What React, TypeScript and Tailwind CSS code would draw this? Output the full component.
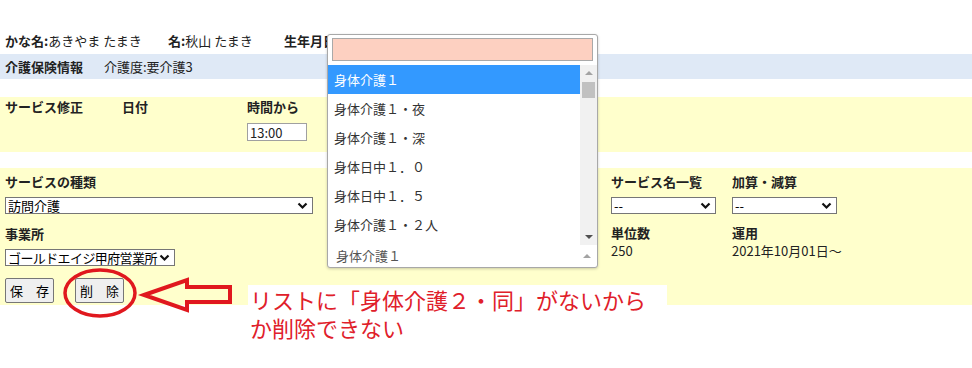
import React from "react";

const font = { fontFamily: '"Noto Sans CJK JP", "Noto Sans", sans-serif' };

function FakeSelect({ value, width, tight }: { value: string; width: string; tight?: boolean }) {
  return (
    <div
      className={`flex items-center justify-between h-[17px] ${width} border border-[#767676] bg-white pl-[2px] pr-[4px] text-[13px] leading-[15px] text-black`}
    >
      <span className={`whitespace-nowrap ${tight ? "tracking-[-0.6px]" : ""}`}>{value}</span>
      <svg width="11" height="8" viewBox="0 0 11 8" className="shrink-0 ml-[2px]">
        <path d="M1.5 1.5 L5.5 5.5 L9.5 1.5" fill="none" stroke="#111" strokeWidth="2.2" />
      </svg>
    </div>
  );
}

const items = [
  "身体介護１",
  "身体介護１・夜",
  "身体介護１・深",
  "身体日中１．０",
  "身体日中１．５",
  "身体介護１・２人",
];

function Dropdown() {
  return (
    <div className="absolute left-[327px] top-[34px] w-[271px] h-[234px] bg-white border border-[#a8a8a8] rounded-[3px] shadow-[0_1px_3px_rgba(0,0,0,0.2)] flex flex-col">
      <div className="px-[4px] pt-[3px] pb-[4px]">
        <div className="h-[23px] bg-[#fdd0c1] border border-[#a9a9a9]" />
      </div>
      <div className="flex h-[180px]">
        <div className="flex-1 overflow-hidden">
          {items.map((it, i) => (
            <div
              key={it}
              className={`h-[29px] flex items-center pl-[6px] text-[13px] ${
                i === 0 ? "bg-[#3399ff] text-white" : "text-[#333]"
              }`}
            >
              {it}
            </div>
          ))}
        </div>
        <div className="w-[17px] bg-[#f1f1f1] relative">
          <div className="absolute left-[5px] top-[6px] w-0 h-0 border-l-[4px] border-r-[4px] border-b-[4px] border-l-transparent border-r-transparent border-b-[#a3a3a3]" />
          <div className="absolute left-[2px] top-[17px] w-[13px] h-[16px] bg-[#c1c1c1]" />
          <div className="absolute left-[5px] bottom-[6px] w-0 h-0 border-l-[4px] border-r-[4px] border-t-[4px] border-l-transparent border-r-transparent border-t-[#505050]" />
        </div>
      </div>
      <div className="flex-1 flex items-center justify-between pl-[8px] pr-[6px] text-[13px] text-[#555]">
        <span>身体介護１</span>
        <div className="w-0 h-0 border-l-[4px] border-r-[4px] border-b-[4px] border-l-transparent border-r-transparent border-b-[#a3a3a3]" />
      </div>
    </div>
  );
}

function Annotation() {
  return (
    <>
      <svg className="absolute left-[60px] top-[265px]" width="180" height="56" viewBox="0 0 180 56">
        <ellipse cx="40" cy="28" rx="35" ry="23" fill="none" stroke="#e0181e" strokeWidth="3.5" />
        <polygon
          points="84,30 127,15 127,22 170,22 170,37 127,37 127,45"
          fill="none"
          stroke="#e0181e"
          strokeWidth="4"
          strokeLinejoin="miter"
        />
      </svg>
      <div className="absolute left-[248px] top-[285px] w-[419px] bg-white pl-[2px] text-[22px] leading-[28px] text-[#e0202a] whitespace-nowrap">
        リストに「身体介護２・同」がないから
        <br />
        か削除できない
      </div>
    </>
  );
}

export default function App() {
  return (
    <div className="relative w-[972px] h-[368px] bg-white overflow-hidden text-[13px] text-[#222]" style={font}>
      <div className="flex items-center h-[20px] mt-[31px] pl-[5px] leading-[20px]">
        <div className="w-[163px]">
          <b>かな名:</b>あきやま たまき
        </div>
        <div className="w-[116px]">
          <b>名:</b>秋山 たまき
        </div>
        <div>
          <b>生年月日</b>
        </div>
      </div>

      <div className="mt-[3px] h-[25px] bg-[#dfe9f6] flex items-center pl-[5px]">
        <b className="w-[99px]">介護保険情報</b>
        <span>介護度:要介護3</span>
      </div>

      <div className="mt-[18px] h-[55px] bg-[#ffffcc] flex pl-[5px] leading-[20px]">
        <div className="w-[117px]">
          <b>サービス修正</b>
        </div>
        <div className="w-[125px]">
          <b>日付</b>
        </div>
        <div>
          <b>時間から</b>
          <div className="mt-[6px] w-[60px] h-[18px] bg-white border border-[#a0a0a0] flex items-center pl-[2px] leading-[15px]">
            13:00
          </div>
        </div>
      </div>

      <div className="mt-[16px] h-[137px] bg-[#ffffcc] flex pl-[5px] pt-[4px]">
        <div className="w-[606px]">
          <div className="leading-[20px]">
            <b>サービスの種類</b>
          </div>
          <div className="mt-[5px]">
            <FakeSelect value="訪問介護" width="w-[308px]" />
          </div>
          <div className="mt-[10px] leading-[20px]">
            <b>事業所</b>
          </div>
          <div className="mt-[5px]">
            <FakeSelect value="ゴールドエイジ甲府営業所" width="w-fit" tight />
          </div>
          <div className="mt-[12px] flex gap-[21px]">
            <button className="w-[49px] h-[25px] bg-[#efefef] border border-[#767676] rounded-[2px] text-[13px] text-black">
              保　存
            </button>
            <button className="w-[49px] h-[25px] bg-[#efefef] border border-[#767676] rounded-[2px] text-[13px] text-black">
              削　除
            </button>
          </div>
        </div>
        <div className="flex gap-[16px]">
          <div className="w-[105px]">
            <div className="leading-[20px]">
              <b>サービス名一覧</b>
            </div>
            <div className="mt-[5px]">
              <FakeSelect value="--" width="w-[105px]" />
            </div>
            <div className="mt-[9px] leading-[19px]">
              <b>単位数</b>
            </div>
            <div className="leading-[17px]">250</div>
          </div>
          <div className="w-[105px]">
            <div className="leading-[20px]">
              <b>加算・減算</b>
            </div>
            <div className="mt-[5px]">
              <FakeSelect value="--" width="w-[105px]" />
            </div>
            <div className="mt-[9px] leading-[19px]">
              <b>運用</b>
            </div>
            <div className="leading-[17px] whitespace-nowrap">2021年10月01日～</div>
          </div>
        </div>
      </div>

      <Dropdown />
      <Annotation />
    </div>
  );
}
